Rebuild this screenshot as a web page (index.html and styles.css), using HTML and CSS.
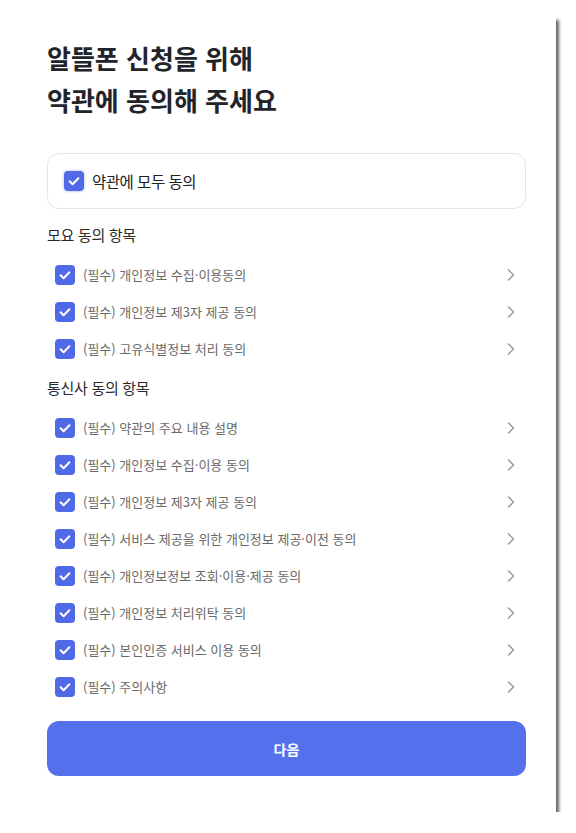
FILE: index.html
```html
<!DOCTYPE html>
<html lang="ko">
<head>
<meta charset="utf-8">
<title>약관 동의</title>
<link rel="stylesheet" href="styles.css">
</head>
<body>
<main class="card">
  <h1 class="title">알뜰폰 신청을 위해<br>약관에 동의해 주세요</h1>

  <label class="all-box">
    <span class="check check-glow">
      <svg viewBox="0 0 20 20" width="20" height="20"><rect width="20" height="20" rx="4" fill="#5069e6"/><path d="M5.6 10.3l3 2.9 5.8-6" fill="none" stroke="#fff" stroke-width="2" stroke-linecap="round" stroke-linejoin="round"/></svg>
    </span>
    <span class="all-label">약관에 모두 동의</span>
  </label>

  <h2 class="group-title">모요 동의 항목</h2>
  <ul class="terms">
    <li class="term"><span class="check"><svg viewBox="0 0 20 20" width="20" height="20"><rect width="20" height="20" rx="4" fill="#5069e6"/><path d="M5.6 10.3l3 2.9 5.8-6" fill="none" stroke="#fff" stroke-width="2" stroke-linecap="round" stroke-linejoin="round"/></svg></span><span class="term-text">(필수) 개인정보 수집·이용동의</span><svg class="chev" viewBox="0 0 8 12" width="8" height="12"><path d="M1.5 1l5 5-5 5" fill="none" stroke="#999" stroke-width="1.5" stroke-linecap="round" stroke-linejoin="round"/></svg></li>
    <li class="term"><span class="check"><svg viewBox="0 0 20 20" width="20" height="20"><rect width="20" height="20" rx="4" fill="#5069e6"/><path d="M5.6 10.3l3 2.9 5.8-6" fill="none" stroke="#fff" stroke-width="2" stroke-linecap="round" stroke-linejoin="round"/></svg></span><span class="term-text">(필수) 개인정보 제3자 제공 동의</span><svg class="chev" viewBox="0 0 8 12" width="8" height="12"><path d="M1.5 1l5 5-5 5" fill="none" stroke="#999" stroke-width="1.5" stroke-linecap="round" stroke-linejoin="round"/></svg></li>
    <li class="term"><span class="check"><svg viewBox="0 0 20 20" width="20" height="20"><rect width="20" height="20" rx="4" fill="#5069e6"/><path d="M5.6 10.3l3 2.9 5.8-6" fill="none" stroke="#fff" stroke-width="2" stroke-linecap="round" stroke-linejoin="round"/></svg></span><span class="term-text">(필수) 고유식별정보 처리 동의</span><svg class="chev" viewBox="0 0 8 12" width="8" height="12"><path d="M1.5 1l5 5-5 5" fill="none" stroke="#999" stroke-width="1.5" stroke-linecap="round" stroke-linejoin="round"/></svg></li>
  </ul>

  <h2 class="group-title">통신사 동의 항목</h2>
  <ul class="terms">
    <li class="term"><span class="check"><svg viewBox="0 0 20 20" width="20" height="20"><rect width="20" height="20" rx="4" fill="#5069e6"/><path d="M5.6 10.3l3 2.9 5.8-6" fill="none" stroke="#fff" stroke-width="2" stroke-linecap="round" stroke-linejoin="round"/></svg></span><span class="term-text">(필수) 약관의 주요 내용 설명</span><svg class="chev" viewBox="0 0 8 12" width="8" height="12"><path d="M1.5 1l5 5-5 5" fill="none" stroke="#999" stroke-width="1.5" stroke-linecap="round" stroke-linejoin="round"/></svg></li>
    <li class="term"><span class="check"><svg viewBox="0 0 20 20" width="20" height="20"><rect width="20" height="20" rx="4" fill="#5069e6"/><path d="M5.6 10.3l3 2.9 5.8-6" fill="none" stroke="#fff" stroke-width="2" stroke-linecap="round" stroke-linejoin="round"/></svg></span><span class="term-text">(필수) 개인정보 수집·이용 동의</span><svg class="chev" viewBox="0 0 8 12" width="8" height="12"><path d="M1.5 1l5 5-5 5" fill="none" stroke="#999" stroke-width="1.5" stroke-linecap="round" stroke-linejoin="round"/></svg></li>
    <li class="term"><span class="check"><svg viewBox="0 0 20 20" width="20" height="20"><rect width="20" height="20" rx="4" fill="#5069e6"/><path d="M5.6 10.3l3 2.9 5.8-6" fill="none" stroke="#fff" stroke-width="2" stroke-linecap="round" stroke-linejoin="round"/></svg></span><span class="term-text">(필수) 개인정보 제3자 제공 동의</span><svg class="chev" viewBox="0 0 8 12" width="8" height="12"><path d="M1.5 1l5 5-5 5" fill="none" stroke="#999" stroke-width="1.5" stroke-linecap="round" stroke-linejoin="round"/></svg></li>
    <li class="term"><span class="check"><svg viewBox="0 0 20 20" width="20" height="20"><rect width="20" height="20" rx="4" fill="#5069e6"/><path d="M5.6 10.3l3 2.9 5.8-6" fill="none" stroke="#fff" stroke-width="2" stroke-linecap="round" stroke-linejoin="round"/></svg></span><span class="term-text">(필수) 서비스 제공을 위한 개인정보 제공·이전 동의</span><svg class="chev" viewBox="0 0 8 12" width="8" height="12"><path d="M1.5 1l5 5-5 5" fill="none" stroke="#999" stroke-width="1.5" stroke-linecap="round" stroke-linejoin="round"/></svg></li>
    <li class="term"><span class="check"><svg viewBox="0 0 20 20" width="20" height="20"><rect width="20" height="20" rx="4" fill="#5069e6"/><path d="M5.6 10.3l3 2.9 5.8-6" fill="none" stroke="#fff" stroke-width="2" stroke-linecap="round" stroke-linejoin="round"/></svg></span><span class="term-text">(필수) 개인정보정보 조회·이용·제공 동의</span><svg class="chev" viewBox="0 0 8 12" width="8" height="12"><path d="M1.5 1l5 5-5 5" fill="none" stroke="#999" stroke-width="1.5" stroke-linecap="round" stroke-linejoin="round"/></svg></li>
    <li class="term"><span class="check"><svg viewBox="0 0 20 20" width="20" height="20"><rect width="20" height="20" rx="4" fill="#5069e6"/><path d="M5.6 10.3l3 2.9 5.8-6" fill="none" stroke="#fff" stroke-width="2" stroke-linecap="round" stroke-linejoin="round"/></svg></span><span class="term-text">(필수) 개인정보 처리위탁 동의</span><svg class="chev" viewBox="0 0 8 12" width="8" height="12"><path d="M1.5 1l5 5-5 5" fill="none" stroke="#999" stroke-width="1.5" stroke-linecap="round" stroke-linejoin="round"/></svg></li>
    <li class="term"><span class="check"><svg viewBox="0 0 20 20" width="20" height="20"><rect width="20" height="20" rx="4" fill="#5069e6"/><path d="M5.6 10.3l3 2.9 5.8-6" fill="none" stroke="#fff" stroke-width="2" stroke-linecap="round" stroke-linejoin="round"/></svg></span><span class="term-text">(필수) 본인인증 서비스 이용 동의</span><svg class="chev" viewBox="0 0 8 12" width="8" height="12"><path d="M1.5 1l5 5-5 5" fill="none" stroke="#999" stroke-width="1.5" stroke-linecap="round" stroke-linejoin="round"/></svg></li>
    <li class="term"><span class="check"><svg viewBox="0 0 20 20" width="20" height="20"><rect width="20" height="20" rx="4" fill="#5069e6"/><path d="M5.6 10.3l3 2.9 5.8-6" fill="none" stroke="#fff" stroke-width="2" stroke-linecap="round" stroke-linejoin="round"/></svg></span><span class="term-text">(필수) 주의사항</span><svg class="chev" viewBox="0 0 8 12" width="8" height="12"><path d="M1.5 1l5 5-5 5" fill="none" stroke="#999" stroke-width="1.5" stroke-linecap="round" stroke-linejoin="round"/></svg></li>
  </ul>

  <button class="next" type="button">다음</button>
</main>
</body>
</html>
```

FILE: styles.css
```css
* {
  box-sizing: border-box;
}

html, body {
  margin: 0;
  padding: 0;
  background: #ffffff;
}

body {
  font-family: "Noto Sans CJK KR", "Noto Sans", sans-serif;
  color: #222;
  padding: 17px 0 0 17px;
}

.card {
  width: 539px;
  padding: 20px 30px 36px;
  background: #fff;
  box-shadow: 3px 3px 3px rgba(0, 0, 0, 0.6);
}

.title {
  margin: 0;
  font-size: 26px;
  line-height: 42px;
  font-weight: 700;
  letter-spacing: 0;
  color: #23242a;
}

.all-box {
  display: flex;
  align-items: center;
  gap: 8px;
  height: 56px;
  margin-top: 32px;
  padding: 0 16px;
  border: 1px solid #e6e6e6;
  border-radius: 12px;
}

.check {
  display: flex;
  width: 20px;
  height: 20px;
  flex: none;
}

.check-glow {
  border-radius: 4px;
  box-shadow: 0 0 3px rgba(80, 105, 230, 0.55);
}

.all-label {
  font-size: 15.5px;
  font-weight: 400;
  letter-spacing: -0.5px;
  color: #222;
}

.group-title {
  margin: 15px 0 10px;
  font-size: 15px;
  line-height: 22px;
  font-weight: 400;
  letter-spacing: -0.3px;
  color: #2a2a2a;
}

.terms + .group-title {
  margin-top: 10px;
}

.terms {
  list-style: none;
  margin: 0;
  padding: 0;
}

.term {
  display: flex;
  align-items: center;
  gap: 8px;
  height: 37px;
  padding: 0 11px 0 8px;
}

.term-text {
  flex: 1;
  font-size: 13px;
  letter-spacing: 0;
  color: #6a6a6a;
}

.chev {
  flex: none;
}

.next {
  display: block;
  width: 100%;
  height: 55px;
  margin-top: 16px;
  border: 0;
  border-radius: 12px;
  background: #5570ec;
  color: #fff;
  font-family: inherit;
  font-size: 14px;
  font-weight: 700;
}
```
